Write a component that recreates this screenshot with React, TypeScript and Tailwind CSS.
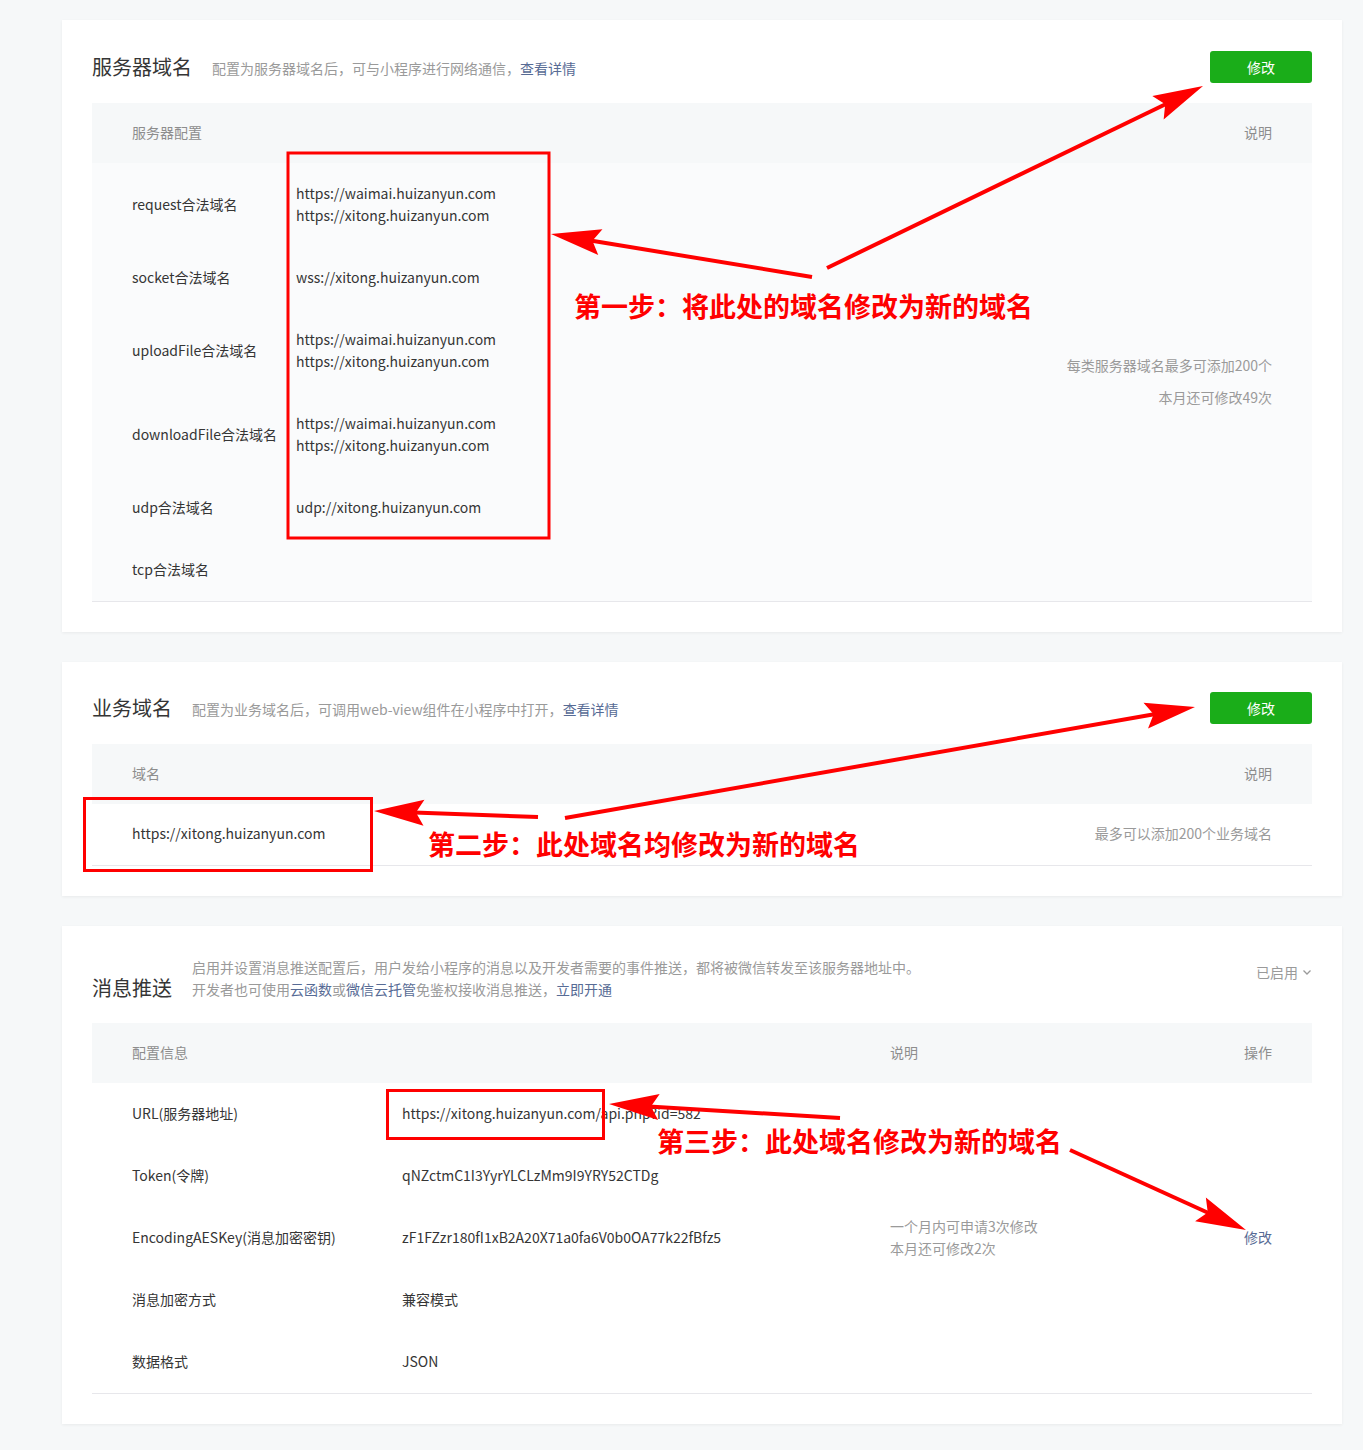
import React from "react"

const font = "font-['Noto_Sans_CJK_SC','Noto_Sans',sans-serif]"

type Arrow = { x1: number; y1: number; x2: number; y2: number }

const arrows: Arrow[] = [
  { x1: 827, y1: 268, x2: 1203, y2: 86 },
  { x1: 812, y1: 277, x2: 551, y2: 234 },
  { x1: 538, y1: 817, x2: 374, y2: 811 },
  { x1: 565, y1: 818, x2: 1195, y2: 707 },
  { x1: 840, y1: 1118, x2: 609, y2: 1104 },
  { x1: 1070, y1: 1150, x2: 1246, y2: 1230 },
]

function ArrowShape({ x1, y1, x2, y2 }: Arrow) {
  const dx = x2 - x1
  const dy = y2 - y1
  const len = Math.sqrt(dx * dx + dy * dy)
  const ux = dx / len
  const uy = dy / len
  const L = 50
  const W = 13
  const bx = x2 - ux * L
  const by = y2 - uy * L
  const nx = -uy
  const ny = ux
  const pts = `${x2},${y2} ${bx + nx * W},${by + ny * W} ${bx + ux * 8},${by + uy * 8} ${bx - nx * W},${by - ny * W}`
  return (
    <g>
      <line x1={x1} y1={y1} x2={bx + ux * 10} y2={by + uy * 10} stroke="#ff0000" strokeWidth={4} />
      <polygon points={pts} fill="#ff0000" />
    </g>
  )
}

function Button() {
  return (
    <button className="w-[102px] h-[32px] rounded-[3px] bg-[#1aad19] text-white text-[14px]">修改</button>
  )
}

function Link({ children }: { children: React.ReactNode }) {
  return <span className="text-[#576b95]">{children}</span>
}

const serverRows: { label: string; values: string[] }[] = [
  { label: "request合法域名", values: ["https://waimai.huizanyun.com", "https://xitong.huizanyun.com"] },
  { label: "socket合法域名", values: ["wss://xitong.huizanyun.com"] },
  { label: "uploadFile合法域名", values: ["https://waimai.huizanyun.com", "https://xitong.huizanyun.com"] },
  { label: "downloadFile合法域名", values: ["https://waimai.huizanyun.com", "https://xitong.huizanyun.com"] },
  { label: "udp合法域名", values: ["udp://xitong.huizanyun.com"] },
  { label: "tcp合法域名", values: [] },
]

const pushRows: { label: string; value: string; note?: string[]; op?: string }[] = [
  { label: "URL(服务器地址)", value: "https://xitong.huizanyun.com/api.php?id=582" },
  { label: "Token(令牌)", value: "qNZctmC1I3YyrYLCLzMm9I9YRY52CTDg" },
  {
    label: "EncodingAESKey(消息加密密钥)",
    value: "zF1FZzr180fI1xB2A20X71a0fa6V0b0OA77k22fBfz5",
    note: ["一个月内可申请3次修改", "本月还可修改2次"],
    op: "修改",
  },
  { label: "消息加密方式", value: "兼容模式" },
  { label: "数据格式", value: "JSON" },
]

function ServerDomain() {
  return (
    <section className="bg-white px-[30px] pt-[31px] pb-[30px] shadow-[0_1px_3px_rgba(0,0,0,0.06)]">
      <div className="flex items-center justify-between h-[32px]">
        <div className="flex items-center">
          <h2 className="text-[20px] text-[#353535] leading-[26px]">服务器域名</h2>
          <p className="ml-5 text-[14px] text-[#9a9a9a] mt-[3px]">
            配置为服务器域名后，可与小程序进行网络通信，<Link>查看详情</Link>
          </p>
        </div>
        <Button />
      </div>
      <div className="mt-5">
        <div className="h-[60px] bg-[#f6f8f9] px-10 flex items-center justify-between text-[14px] text-[#8d8d8d]">
          <span className="-mt-0.5">服务器配置</span>
          <span className="-mt-0.5">说明</span>
        </div>
        <div className="flex bg-[#fafbfc] border-b border-[#e7e7eb]">
          <div className="flex-1">
            {serverRows.map((r) => (
              <div key={r.label} className="flex items-center pt-[19px] pb-[21px] text-[14px] leading-[22px] text-[#353535]">
                <div className="w-[204px] pl-10 shrink-0">{r.label}</div>
                <div className="flex flex-col min-h-[22px]">
                  {r.values.map((v, i) => (
                    <span key={i}>{v}</span>
                  ))}
                </div>
              </div>
            ))}
          </div>
          <div className="flex flex-col justify-center items-end pr-10 pb-0.5 text-[14px] leading-[32px] text-[#9a9a9a]">
            <span>每类服务器域名最多可添加200个</span>
            <span>本月还可修改49次</span>
          </div>
        </div>
      </div>
    </section>
  )
}

function BusinessDomain() {
  return (
    <section className="bg-white px-[30px] pt-[30px] pb-[30px] shadow-[0_1px_3px_rgba(0,0,0,0.06)]">
      <div className="flex items-center justify-between h-[32px]">
        <div className="flex items-center">
          <h2 className="text-[20px] text-[#353535] leading-[26px]">业务域名</h2>
          <p className="ml-5 text-[14px] text-[#9a9a9a] mt-[3px]">
            配置为业务域名后，可调用web-view组件在小程序中打开，<Link>查看详情</Link>
          </p>
        </div>
        <Button />
      </div>
      <div className="mt-5">
        <div className="h-[60px] bg-[#f6f8f9] px-10 flex items-center justify-between text-[14px] text-[#8d8d8d]">
          <span className="-mt-0.5">域名</span>
          <span className="-mt-0.5">说明</span>
        </div>
        <div className="h-[62px] px-10 flex items-center justify-between border-b border-[#e7e7eb] text-[14px]">
          <span className="-mt-0.5 text-[#353535]">https://xitong.huizanyun.com</span>
          <span className="-mt-0.5 text-[#9a9a9a]">最多可以添加200个业务域名</span>
        </div>
      </div>
    </section>
  )
}

function MessagePush() {
  return (
    <section className="bg-white px-[30px] pt-[30px] pb-[30px] shadow-[0_1px_3px_rgba(0,0,0,0.06)]">
      <div className="flex items-start justify-between">
        <div className="flex items-end">
          <h2 className="text-[20px] text-[#353535] leading-[26px] translate-y-px">消息推送</h2>
          <div className="ml-5 text-[14px] leading-[22px] text-[#9a9a9a]">
            <p>启用并设置消息推送配置后，用户发给小程序的消息以及开发者需要的事件推送，都将被微信转发至该服务器地址中。</p>
            <p>
              开发者也可使用<Link>云函数</Link>或<Link>微信云托管</Link>免鉴权接收消息推送，<Link>立即开通</Link>
            </p>
          </div>
        </div>
        <div className="mt-[5px] flex items-center gap-1 text-[14px] leading-[22px] text-[#9a9a9a]">
          <span>已启用</span>
          <svg width="10" height="10" viewBox="0 0 10 10" fill="none" stroke="#9a9a9a" strokeWidth="1.3">
            <path d="M1.5 3.5 L5 7 L8.5 3.5" />
          </svg>
        </div>
      </div>
      <div className="mt-[23px]">
        <div className="h-[60px] bg-[#f6f8f9] grid grid-cols-[310px_488px_1fr_120px] items-center text-[14px] text-[#8d8d8d]">
          <span className="pl-10 -mt-0.5">配置信息</span>
          <span />
          <span className="-mt-0.5">说明</span>
          <span className="text-right pr-10 -mt-0.5">操作</span>
        </div>
        <div className="border-b border-[#e7e7eb]">
          {pushRows.map((r) => (
            <div key={r.label} className="h-[62px] pb-0.5 grid grid-cols-[310px_488px_1fr_120px] items-center text-[14px] leading-[22px]">
              <span className="pl-10 text-[#353535]">{r.label}</span>
              <span className="text-[#353535]">{r.value}</span>
              <span className="flex flex-col text-[#9a9a9a]">
                {r.note?.map((n) => (
                  <span key={n}>{n}</span>
                ))}
              </span>
              <span className="text-right pr-10 text-[#576b95]">{r.op}</span>
            </div>
          ))}
        </div>
      </div>
    </section>
  )
}

export default function App() {
  return (
    <div className={`relative min-h-[1450px] bg-[#f6f8f9] pt-5 pb-[27px] ${font}`}>
      <div className="ml-[62px] w-[1280px] flex flex-col gap-[30px]">
        <ServerDomain />
        <BusinessDomain />
        <MessagePush />
      </div>

      {/* annotations */}
      <svg className="absolute left-0 top-0 pointer-events-none" width="1363" height="1450" viewBox="0 0 1363 1450">
        <rect x="288" y="153" width="261" height="385" fill="none" stroke="#ff0000" strokeWidth="3" />
        <rect x="84.5" y="798.5" width="287" height="72" fill="none" stroke="#ff0000" strokeWidth="3" />
        <rect x="387.5" y="1090.5" width="216" height="48" fill="none" stroke="#ff0000" strokeWidth="3" />
        {arrows.map((a, i) => (
          <ArrowShape key={i} {...a} />
        ))}
      </svg>
      <div className="absolute left-[574px] top-[291px] text-[27px] font-bold leading-[30px] text-[#ff0000] whitespace-nowrap">
        第一步：将此处的域名修改为新的域名
      </div>
      <div className="absolute left-[428px] top-[829px] text-[27px] font-bold leading-[30px] text-[#ff0000] whitespace-nowrap">
        第二步：此处域名均修改为新的域名
      </div>
      <div className="absolute left-[657px] top-[1126px] text-[27px] font-bold leading-[30px] text-[#ff0000] whitespace-nowrap">
        第三步：此处域名修改为新的域名
      </div>
    </div>
  )
}
